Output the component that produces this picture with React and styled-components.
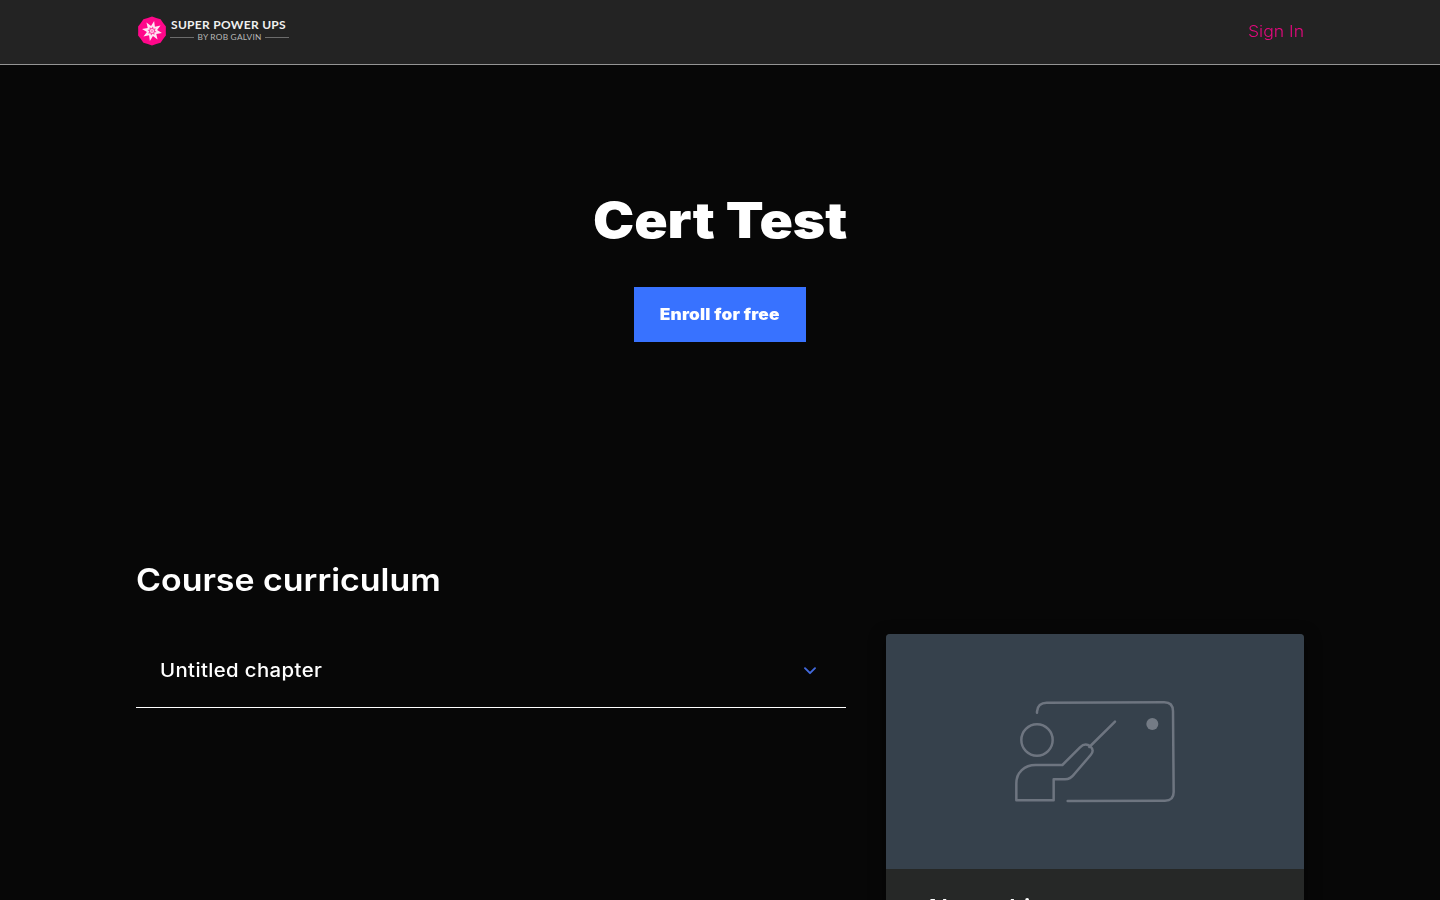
import React from "react";
import styled, { createGlobalStyle } from "styled-components";

const GlobalStyle = createGlobalStyle`
  * { box-sizing: border-box; }
  html, body { margin: 0; height: 100%; overflow: hidden; }
  body { background: #070707; color: #fff; font-family: Inter, "Open Sans", sans-serif; }
  h1, h2, h3, p { margin: 0; }
`;

const Page = styled.div`
  height: 900px;
  overflow: hidden;
  background: #070707;
`;

/* Stretches the letterforms horizontally for a wide geometric look. */
const Wide = styled.span`
  display: inline-block;
  transform: scaleX(${(p) => p.$by});
  transform-origin: ${(p) => p.$from || "left"} center;
  will-change: transform;
  white-space: nowrap;
`;

const Header = styled.header`
  height: 65px;
  background: #232323;
  border-bottom: 1px solid #949494;
`;

const Container = styled.div`
  width: 1168px;
  margin: 0 auto;
`;

const HeaderRow = styled(Container)`
  display: flex;
  justify-content: space-between;
  align-items: center;
  height: 61px;
`;

const Brand = styled.div`
  display: flex;
  align-items: center;
  gap: 2px;
`;

const BrandText = styled.div`
  width: 119px;
  font-family: Lato, sans-serif;
`;

const BrandName = styled.div`
  padding-left: 1px;
  font-size: 12px;
  line-height: 13px;
  font-weight: 700;
  letter-spacing: 0.3px;
  color: #f0f0f0;
  white-space: nowrap;
`;

const BrandByline = styled.div`
  display: flex;
  align-items: center;
  gap: 3px;
  font-size: 8.3px;
  line-height: 12px;
  letter-spacing: 0.25px;
  color: #b8b8b8;
  white-space: nowrap;
  &::before, &::after { content: ""; flex: 1; height: 1px; background: #6c6c6c; }
`;

const SignIn = styled.a`
  color: #e5087e;
  font-size: 16px;
  line-height: 24px;
  font-weight: 300;
`;

const Hero = styled.section`
  display: flex;
  flex-direction: column;
  align-items: center;
  height: 435px;
  padding-top: 123px;
`;

const Title = styled.h1`
  font-size: 49.5px;
  line-height: 64px;
  font-weight: 900;
`;

const EnrollButton = styled.button`
  width: 172px;
  height: 55px;
  margin-top: 35px;
  padding: 1px 0 0;
  border: 0;
  background: #3872ff;
  color: #fff;
  font: 900 15.5px/24px Inter, sans-serif;
  letter-spacing: 0.15px;
`;

const SectionTitle = styled.h2`
  padding-top: 60px;
  font-size: 31px;
  line-height: 40px;
  font-weight: 600;
`;

const Columns = styled.div`
  display: grid;
  grid-template-columns: 710px 418px;
  gap: 40px;
  margin-top: 34px;
  align-items: start;
`;

const Chapter = styled.div`
  display: flex;
  justify-content: space-between;
  align-items: center;
  height: 74px;
  padding: 0 30px 0 24px;
  border-bottom: 1px solid #fff;
`;

const ChapterName = styled.h3`
  padding-bottom: 2px;
  font-size: 18.5px;
  line-height: 28px;
  font-weight: 450;
  letter-spacing: 0.35px;
`;

const Card = styled.aside`
  height: 400px;
  border-radius: 4px;
  overflow: hidden;
  background: #262827;
  box-shadow: 0 4px 16px rgba(0, 0, 0, 0.5);
`;

const CardImage = styled.div`
  display: flex;
  justify-content: center;
  height: 235px;
  padding-top: 56px;
  background: #36414c;
`;

const CardTitle = styled.h3`
  padding: 22px 38px;
  font-size: 23px;
  line-height: 34px;
  font-weight: 600;
  white-space: nowrap;
`;

function starPoints(cx, cy, outer, inner, count) {
  return Array.from({ length: count * 2 }, (_, i) => {
    const r = i % 2 ? inner : outer;
    const a = (Math.PI * i) / count - Math.PI / 2;
    return `${(cx + r * Math.cos(a)).toFixed(2)},${(cy + r * Math.sin(a)).toFixed(2)}`;
  }).join(" ");
}

const Emblem = () => (
  <svg width="32" height="30" viewBox="0 0 32 30" aria-hidden="true">
    <polygon points={starPoints(16, 15, 14.6, 13.8, 10)} fill="#ff078a" />
    <polygon points={starPoints(16, 15, 10.2, 5.2, 8)} fill="#ffe4f2" transform="rotate(12 16 15)" />
    <polygon points={starPoints(16, 15, 4.6, 2.8, 8)} fill="#ff3fa4" transform="rotate(12 16 15)" />
    <circle cx="16" cy="15" r="2" fill="#ffd5ea" />
    <circle cx="16" cy="15" r="0.8" fill="#ff3fa4" />
  </svg>
);

const TeacherIcon = () => (
  <svg width="180" height="120" viewBox="0 0 540 360" fill="none" stroke="#6e7580" strokeWidth="7.5" strokeLinecap="round" strokeLinejoin="round" aria-hidden="true">
    <path d="M96 68v-3c1-17 12-27 29-27l353-1c17 0 26 10 26 27l2 242c0 17-9 26-26 26l-292 1" />
    <circle cx="96" cy="150" r="47" />
    <path d="M34 331v-51c0-33 24-55 58-55h80l53-53c10-10 22-10 31-3 9 8 9 17 1 26l-49 57c-8 11-16 16-28 16h-34v63z" />
    <path d="M253 171l77-76" />
    <circle cx="442" cy="102" r="18" fill="#747b85" stroke="none" />
  </svg>
);

const Chevron = () => (
  <svg width="12" height="8" viewBox="0 0 12 8" fill="none" stroke="#4269dc" strokeWidth="1.9" strokeLinecap="round" strokeLinejoin="round" aria-hidden="true">
    <path d="M1 1.2l5 5 5-5" />
  </svg>
);

export default function App() {
  return (
    <Page>
      <GlobalStyle />
      <Header>
        <HeaderRow>
          <Brand>
            <Emblem />
            <BrandText>
              <BrandName>SUPER POWER UPS</BrandName>
              <BrandByline>BY ROB GALVIN</BrandByline>
            </BrandText>
          </Brand>
          <SignIn><Wide $by={1.1} $from="right">Sign In</Wide></SignIn>
        </HeaderRow>
      </Header>
      <Hero>
        <Title><Wide $by={1.115} $from="center">Cert Test</Wide></Title>
        <EnrollButton><Wide $by={1.115} $from="center">Enroll for free</Wide></EnrollButton>
      </Hero>
      <Container as="main">
        <SectionTitle><Wide $by={1.094}>Course curriculum</Wide></SectionTitle>
        <Columns>
          <Chapter>
            <ChapterName><Wide $by={1.1}>Untitled chapter</Wide></ChapterName>
            <Chevron />
          </Chapter>
          <Card>
            <CardImage>
              <TeacherIcon />
            </CardImage>
            <CardTitle><Wide $by={1.05}>About this course</Wide></CardTitle>
          </Card>
        </Columns>
      </Container>
    </Page>
  );
}
